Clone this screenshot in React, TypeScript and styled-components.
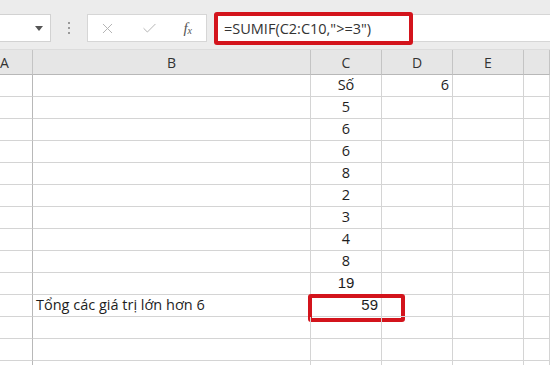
import React from 'react';
import styled, { createGlobalStyle } from 'styled-components';
import { X, Check } from 'lucide-react';

const GlobalStyle = createGlobalStyle`
  html, body {
    margin: 0;
    padding: 0;
    background: #ffffff;
    overflow: hidden;
  }
  * {
    box-sizing: border-box;
  }
`;

const Page = styled.div`
  width: 550px;
  height: 365px;
  overflow: hidden;
  font-family: 'Open Sans', 'Noto Sans', sans-serif;
  color: #1e1e1e;
`;

const Toolbar = styled.div`
  display: flex;
  align-items: stretch;
  height: 50px;
  padding: 14px 0 7px;
  background: #ececec;
  border-bottom: 1px solid #dcdcdc;
`;

const NameBox = styled.div`
  width: 51px;
  display: flex;
  align-items: center;
  justify-content: flex-end;
  padding-right: 7px;
  background: #fff;
  border: 1px solid #d2d2d2;
  border-left: 0;
`;

const Caret = styled.span`
  width: 0;
  height: 0;
  border-left: 4px solid transparent;
  border-right: 4px solid transparent;
  border-top: 5px solid #555;
`;

const Grip = styled.div`
  width: 36px;
  display: flex;
  flex-direction: column;
  align-items: center;
  justify-content: center;
  gap: 3px;

  span {
    width: 2px;
    height: 2px;
    background: #9a9a9a;
  }
`;

const Buttons = styled.div`
  width: 120px;
  display: flex;
  align-items: center;
  justify-content: space-between;
  padding: 0 14px 0 11px;
  background: #fff;
  border: 1px solid #d6d6d6;
  color: #b4b4b4;
`;

const Fx = styled.span`
  font-family: 'Liberation Serif', serif;
  font-style: italic;
  font-size: 15px;
  color: #555;

  sub {
    font-size: 10px;
    vertical-align: -1px;
  }
`;

const FormulaBar = styled.div`
  position: relative;
  flex: 1;
  margin-left: 7px;
  display: flex;
  align-items: center;
  padding-left: 9px;
  background: #fff;
  border: 1px solid #d6d6d6;
  border-right: 0;
  font-size: 14.5px;
  color: #333;
`;

const Highlight = styled.div<{ $top: number; $left: number; $width: number; $height: number }>`
  position: absolute;
  top: ${(p) => p.$top}px;
  left: ${(p) => p.$left}px;
  width: ${(p) => p.$width}px;
  height: ${(p) => p.$height}px;
  border: 4px solid #d3141c;
  border-radius: 3px;
  pointer-events: none;
`;

const Sheet = styled.div`
  display: grid;
  grid-template-columns: 33px 278px 71px 71px 71px 1fr;
`;

const Head = styled.div<{ $start?: boolean }>`
  height: 25px;
  display: flex;
  align-items: center;
  justify-content: ${(p) => (p.$start ? 'flex-start' : 'center')};
  background: #e6e6e6;
  border-right: 1px solid #c4c4c4;
  border-bottom: 1px solid #b8b8b8;
  font-size: 14px;
  color: #333;
`;

const Cell = styled.div<{ $align?: 'left' | 'center' | 'right'; $arial?: boolean }>`
  position: relative;
  height: 22px;
  display: flex;
  align-items: flex-end;
  padding: 0 3px 1px;
  justify-content: ${(p) =>
    p.$align === 'right' ? 'flex-end' : p.$align === 'center' ? 'center' : 'flex-start'};
  border-right: 1px solid #d4d4d4;
  border-bottom: 1px solid #d4d4d4;
  font-family: ${(p) => (p.$arial ? "'Liberation Sans', Arial, sans-serif" : "'Open Sans', 'Noto Sans', sans-serif")};
  font-size: ${(p) => (p.$arial ? 15 : 14.5)}px;
  line-height: 20px;
  white-space: nowrap;
`;

const RowHead = styled(Cell)`
  border-right-color: #b8b8b8;
`;

const numbers = ['5', '6', '6', '8', '2', '3', '4', '8'];

export default function App() {
  const rows: React.ReactNode[] = [];

  rows.push(
    <React.Fragment key="r1">
      <RowHead />
      <Cell />
      <Cell $align="center">Số</Cell>
      <Cell $align="right">6</Cell>
      <Cell />
      <Cell />
    </React.Fragment>
  );

  numbers.forEach((n, i) => {
    rows.push(
      <React.Fragment key={'n' + i}>
        <RowHead />
        <Cell />
        <Cell $align="center">{n}</Cell>
        <Cell />
        <Cell />
        <Cell />
      </React.Fragment>
    );
  });

  rows.push(
    <React.Fragment key="r19">
      <RowHead />
      <Cell />
      <Cell $align="center" $arial>19</Cell>
      <Cell />
      <Cell />
      <Cell />
    </React.Fragment>
  );

  rows.push(
    <React.Fragment key="total">
      <RowHead />
      <Cell>Tổng các giá trị lớn hơn 6</Cell>
      <Cell $align="right" $arial>
        59
        <Highlight $top={-1} $left={-3} $width={97} $height={28} />
      </Cell>
      <Cell />
      <Cell />
      <Cell />
    </React.Fragment>
  );

  for (let i = 0; i < 3; i++) {
    rows.push(
      <React.Fragment key={'e' + i}>
        <RowHead />
        <Cell />
        <Cell />
        <Cell />
        <Cell />
        <Cell />
      </React.Fragment>
    );
  }

  return (
    <Page>
      <GlobalStyle />
      <Toolbar>
        <NameBox>
          <Caret />
        </NameBox>
        <Grip>
          <span />
          <span />
          <span />
        </Grip>
        <Buttons>
          <X size={17} strokeWidth={1.4} />
          <Check size={17} strokeWidth={1.4} />
          <Fx>
            f<sub>x</sub>
          </Fx>
        </Buttons>
        <FormulaBar>
          =SUMIF(C2:C10,"&gt;=3")
          <Highlight $top={-3} $left={-1} $width={199} $height={33} />
        </FormulaBar>
      </Toolbar>
      <Sheet>
        <Head $start>A</Head>
        <Head>B</Head>
        <Head>C</Head>
        <Head>D</Head>
        <Head>E</Head>
        <Head />
        {rows}
      </Sheet>
    </Page>
  );
}
